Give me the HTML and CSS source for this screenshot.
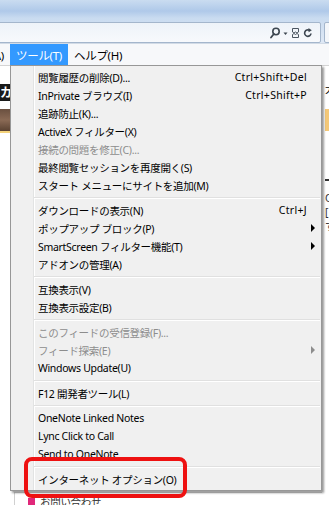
FILE: index.html
```html
<!DOCTYPE html>
<html lang="ja">
<head>
    <meta charset="UTF-8">
    <title>ツール メニュー</title>
    <link rel="stylesheet" href="styles.css">
</head>
<body>
    <!-- Browser chrome -->
    <div class="chrome">
        <div class="addr-row">
            <div class="addr">
                <div class="addr-icons">
                    <svg class="ico" width="10" height="12" viewBox="0 0 10 12">
                        <circle cx="6" cy="4.5" r="3.2" fill="none" stroke="#3c4650" stroke-width="1.6"/>
                        <path d="M3.8 7 L1 10.5" stroke="#3c4650" stroke-width="1.8" stroke-linecap="round"/>
                    </svg>
                    <svg class="ico" width="5" height="12" viewBox="0 0 5 12">
                        <path d="M0.5 5.5 H4.5 L2.5 8 Z" fill="#3c4650"/>
                    </svg>
                    <svg class="ico" width="9" height="12" viewBox="0 0 9 12">
                        <path d="M1.5 1.5 H7.5 V5 L6 6 L4.5 5 L3 6 L1.5 5 Z" fill="none" stroke="#4a5560" stroke-width="1"/>
                        <path d="M1.5 7.5 L3 6.5 L4.5 7.5 L6 6.5 L7.5 7.5 V10.5 H1.5 Z" fill="none" stroke="#4a5560" stroke-width="1"/>
                    </svg>
                    <svg class="ico" width="10" height="12" viewBox="0 0 10 12">
                        <path d="M8 6.5 A3.2 3.2 0 1 1 6.5 3.4" fill="none" stroke="#3c4650" stroke-width="1.6"/>
                        <path d="M5.5 1 L8.8 3.2 L5.6 5.3 Z" fill="#3c4650"/>
                    </svg>
                </div>
            </div>
            <div class="addr-next"></div>
        </div>
    </div>

    <!-- Menu bar -->
    <div class="menubar">
        <div class="mb-cut"><span class="mb-item">お気に入り(A)</span></div>
        <span class="mb-item active">ツール(T)</span>
        <span class="mb-item">ヘルプ(H)</span>
    </div>

    <!-- Page underneath -->
    <div class="page">
        <div class="page-left">
            <div class="logo-block">カ</div>
            <div class="banner"></div>
        </div>
        <div class="page-mid">
            <div class="contact-box">
                <div class="contact-row"><span class="pink-ico"></span>お問い合わせ</div>
            </div>
        </div>
        <div class="page-right">
            <div class="r-glyph">大</div>
            <div class="r-orange"></div>
            <div class="r-line"></div>
            <div class="r-text">C<br>[<br>す</div>
        </div>

        <!-- Tools dropdown -->
        <div class="dropdown">
            <div class="item"><span>閲覧履歴の削除(D)...</span><span class="key">Ctrl+Shift+Del</span></div>
            <div class="item"><span>InPrivate ブラウズ(I)</span><span class="key">Ctrl+Shift+P</span></div>
            <div class="item"><span>追跡防止(K)...</span></div>
            <div class="item"><span>ActiveX フィルター(X)</span></div>
            <div class="item disabled"><span>接続の問題を修正(C)...</span></div>
            <div class="item"><span>最終閲覧セッションを再度開く(S)</span></div>
            <div class="item"><span>スタート メニューにサイトを追加(M)</span></div>
            <div class="sep"></div>
            <div class="item"><span>ダウンロードの表示(N)</span><span class="key">Ctrl+J</span></div>
            <div class="item"><span>ポップアップ ブロック(P)</span><span class="sub"></span></div>
            <div class="item"><span>SmartScreen フィルター機能(T)</span><span class="sub"></span></div>
            <div class="item"><span>アドオンの管理(A)</span></div>
            <div class="sep"></div>
            <div class="item"><span>互換表示(V)</span></div>
            <div class="item"><span>互換表示設定(B)</span></div>
            <div class="sep"></div>
            <div class="item disabled"><span>このフィードの受信登録(F)...</span></div>
            <div class="item disabled"><span>フィード探索(E)</span><span class="sub"></span></div>
            <div class="item"><span>Windows Update(U)</span></div>
            <div class="sep"></div>
            <div class="item"><span>F12 開発者ツール(L)</span></div>
            <div class="sep"></div>
            <div class="item"><span>OneNote Linked Notes</span></div>
            <div class="item"><span>Lync Click to Call</span></div>
            <div class="item"><span>Send to OneNote</span></div>
            <div class="sep"></div>
            <div class="item"><span>インターネット オプション(O)</span></div>
        </div>

        <!-- Highlight marker -->
        <div class="marker"></div>
    </div>
</body>
</html>
```

FILE: styles.css
```css
:root {
    --menu-bg: #f0f0f0;
    --menu-border: #979797;
    --gutter: #e2e3e3;
    --text: #000;
    --text-disabled: #8d8d8d;
    --active: #3399ff;
    --font: "Noto Sans", "Noto Sans CJK JP", sans-serif;
}

* {
    box-sizing: border-box;
    margin: 0;
    padding: 0;
}

body {
    width: 329px;
    height: 505px;
    overflow: hidden;
    font-family: var(--font);
    font-size: 10.5px;
    letter-spacing: -0.3px;
    color: var(--text);
    background: #fff;
}

/* Browser chrome */
.chrome {
    height: 43px;
    padding-top: 22px;
    background: linear-gradient(#cadcf0 0px, #afc9e9 11px, #c9dbf0 18px, #dfe9f6 43px);
}

.addr-row {
    display: flex;
    height: 21px;
    gap: 3px;
}

.addr {
    flex: 1;
    margin-left: -2px;
    border: 1px solid #a4b6cc;
    border-radius: 2px;
    background: linear-gradient(#eef3f9, #f7f9fc);
    display: flex;
    align-items: center;
}

.addr-icons {
    margin-left: auto;
    margin-right: 7px;
    display: flex;
    align-items: center;
    gap: 3px;
}

.ico {
    display: block;
}

.addr-next {
    width: 8px;
    margin-right: -3px;
    border: 1px solid #a4b6cc;
    border-radius: 2px;
    background: #f3f6fa;
}

/* Menu bar */
.menubar {
    height: 22px;
    border-top: 1px solid #d2dbe6;
    background: #f7f8fa;
    display: flex;
    align-items: stretch;
}

.mb-cut {
    width: 10px;
    overflow: hidden;
    display: flex;
    justify-content: flex-end;
}

.mb-item {
    flex-shrink: 0;
    padding: 0 6px;
    display: flex;
    align-items: center;
    font-size: 11.5px;
}

.mb-item.active {
    background: var(--active);
    color: #fff;
}

/* Page underneath the menu */
.page {
    position: relative;
    height: 440px;
    border-top: 1px solid #d4d4d4;
    display: flex;
}

.page-left {
    width: 10px;
    padding-top: 18px;
}

.logo-block {
    height: 17px;
    background: #1a1a1a;
    color: #fff;
    font-weight: bold;
    font-size: 12px;
    line-height: 17px;
    text-align: right;
    overflow: hidden;
}

.banner {
    margin-top: 8px;
    height: 24px;
    background: linear-gradient(#6a5040, #8a6a55 50%, #5a4232);
    border-bottom: 2px solid #f3d27a;
}

.page-mid {
    flex: 1;
    display: flex;
    flex-direction: column;
    justify-content: flex-end;
    overflow: hidden;
}

.contact-box {
    margin-left: 4px;
    height: 13px;
    border-left: 1px solid #d0d0d0;
    border-top: 1px solid #d8d8d8;
    padding: 3px 0 0 13px;
}

.contact-row {
    display: flex;
    align-items: center;
    gap: 5px;
    color: #333;
    line-height: 12px;
}

.pink-ico {
    width: 7px;
    height: 8px;
    background: #e0287a;
}

.page-right {
    width: 7px;
    padding: 18px 0 0 3px;
    overflow: hidden;
}

.r-glyph {
    line-height: 10px;
    white-space: nowrap;
}

.r-orange {
    margin-top: 15px;
    height: 22px;
    background: #f4c878;
}

.r-line {
    margin-top: 48px;
    height: 2px;
    background: #333;
}

.r-text {
    margin-top: 10px;
    line-height: 14px;
    color: #333;
}

/* Tools dropdown */
.dropdown {
    position: absolute;
    top: -1px;
    left: 10px;
    width: 312px;
    border: 1px solid var(--menu-border);
    padding: 2px;
    background:
        linear-gradient(to right, transparent 22px, var(--gutter) 22px, var(--gutter) 23px, #fff 23px, #fff 24px, transparent 24px),
        var(--menu-bg);
    box-shadow: 2px 2px 2px rgba(0, 0, 0, 0.4);
}

.item {
    height: 18px;
    display: flex;
    align-items: center;
    padding: 0 12px 0 25px;
    white-space: nowrap;
}

.item .key {
    margin-left: auto;
    letter-spacing: 0.3px;
}

.item .sub {
    margin-left: auto;
    margin-right: -8px;
    width: 0;
    height: 0;
    border-left: 4px solid var(--text);
    border-top: 4px solid transparent;
    border-bottom: 4px solid transparent;
}

.item.disabled {
    color: var(--text-disabled);
}

.item.disabled .sub {
    border-left-color: var(--text-disabled);
}

.sep {
    height: 7px;
    margin: 0 -1px 0 21px;
    position: relative;
}

.sep::after {
    content: "";
    position: absolute;
    left: 0;
    right: 0;
    top: 3px;
    height: 1px;
    background: #e0e0e0;
    border-bottom: 1px solid #fff;
    box-sizing: content-box;
}

/* Red highlight around the last item */
.marker {
    position: absolute;
    left: 24px;
    top: 391px;
    width: 163px;
    height: 41px;
    border: 4px solid #ee1111;
    border-radius: 8px;
}
```
